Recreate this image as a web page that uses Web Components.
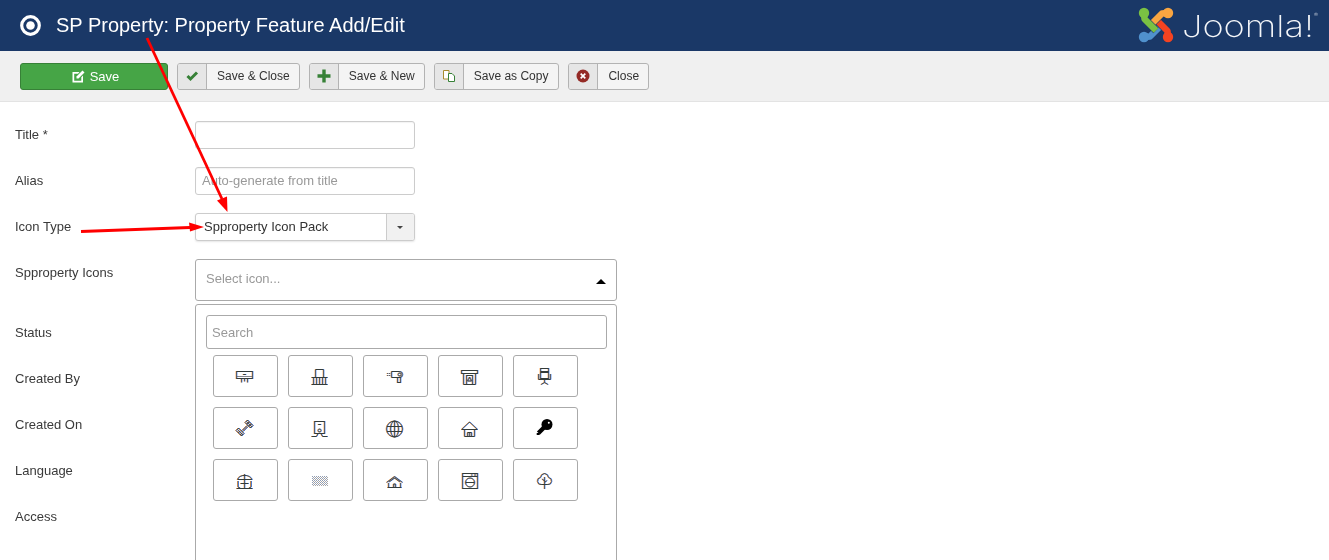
<!DOCTYPE html>
<html lang="en">
<head>
<meta charset="utf-8">
<title>SP Property: Property Feature Add/Edit</title>
<style>
  html, body { margin: 0; height: 100%; overflow: hidden; background: #fff; }
  body { font-family: "Liberation Sans", Arial, sans-serif; font-size: 13px; color: #333; }
</style>
</head>
<body>
<app-page></app-page>

<script>
// small helper so every component keeps its style next to its markup
function shadow(el, html) {
  el.attachShadow({ mode: 'open' }).innerHTML = html;
}

// line icons, 1:1 on a 24px box. drawn three times below for the lcd colour fringe
const ICONS = {
  aircon: `<rect x="3.5" y="7.5" width="16" height="7"/><path d="M4 12.500h15" opacity=".5"/><path d="M10 10.500h3M8.500 15v3.500M11.500 15v2.500M14.500 15v3.500"/>`,
  heater: `<path d="M7.500 13V5.500h8V13M3.500 13.500h16M3.500 20.500h16M5.500 14v6M8.500 14v6M11.500 14v6M14.500 14v6M17.500 14v6"/>`,
  dryer: `<path d="M8.500 7.500h8a3 3 0 0 1 0 6h-8zM4 9.500h1M6 9.500h1M4 11.500h1M6 11.500h1"/><circle cx="16.500" cy="10.500" r="1.500"/><rect x="14.500" y="13.500" width="3" height="5"/>`,
  fireplace: `<rect x="3.500" y="6.500" width="16" height="3"/><path d="M5.500 9.500V20.500h12V9.500"/><rect x="8.500" y="11.500" width="6" height="9"/><path d="M11.500 13l2 4h-4z"/>`,
  chair: `<rect x="7.500" y="4.500" width="8" height="3"/><rect x="7.500" y="8.500" width="8" height="6"/><path d="M5.500 10v5.500h12V10M11.500 15.500v3M8 20.500l3.500-2 3.500 2"/>`,
  dumbbell: `<path d="M12 6.500L14.500 4l5.500 5.500L17.500 12zM3 14.500L5.500 12l5.500 5.500L8.500 20zM9 14.500l5-5M10 15.500l5-5M13.500 5.500L19 11M4.500 13.500L10 19M14 8l2-2M16 10l2-2M5 17l2-2M7 19l2-2"/>`,
  boiler: `<rect x="6.500" y="5.500" width="10" height="12"/><path d="M10 8.500h3M3.500 20.500h5l1.500-3h3l1.500 3h5"/><circle cx="11.500" cy="14.500" r="1.500"/>`,
  globe: `<circle cx="11.500" cy="13" r="8"/><ellipse cx="11.500" cy="13" rx="4" ry="8"/><path d="M11.500 5v16M4 10.500h15M4 15.500h15"/>`,
  house: `<path d="M3.500 13.500L11.500 6l8 7.500zM6.500 14v6.500h10V14M9.500 20.500v-4h4v4M11.500 16.500v4"/>`,
  gazebo: `<path d="M4.500 11.500C6 6 17 6 19 11.500zM11.500 6v14M7.500 15.500h8M5 13v6l2 1M18 13v6l-2 1M3.500 20.500h16"/>`,
  cottage: `<path d="M3.500 14.500l8-6 8 6M6 14l5.500-4 5.500 4M5.500 15v4M17.500 15v4M4.500 19.500h14M10.500 19v-3h2v3"/>`,
  washer: `<rect x="4.500" y="5.500" width="15" height="15"/><path d="M4.500 8.500h15M13 7h1.500M16 7h2M7.500 14.500h9"/><circle cx="12" cy="14.500" r="4.500"/>`,
  tree: `<path d="M11.500 5.500a4.500 4.500 0 0 1 4 4 3.500 3.500 0 0 1-1 7h-6a3.500 3.500 0 0 1-1-7 4.500 4.500 0 0 1 4-4zM11.500 9v12M11.500 13L9 11M11.500 14.500l2.500-2"/>`,
};

// these two do not take the fringe
const SOLID_ICONS = {
  key: `<circle cx="14" cy="8.500" r="5.500" fill="#000"/><path d="M11 11.500L5.500 17" stroke="#000" stroke-width="4.500"/><path d="M3.700 19h3v-2h-3z" fill="#000"/><circle cx="15.800" cy="6.800" r="1" fill="#fff"/>`,
  pool: `<path fill="none" stroke="#8f9cb4" stroke-dasharray="1 1" d="M4 8.500h16M4 10.500h16M4 12.500h16M4 14.500h16M4 16.500h16"/><path fill="none" stroke="#a9a6a6" stroke-dasharray="1 1" d="M5 9.500h15M5 11.500h15M5 13.500h15M5 15.500h15M5 17.500h15"/>`,
};

const TILES = ['aircon', 'heater', 'dryer', 'fireplace', 'chair', 'dumbbell', 'boiler', 'globe', 'house', 'key', 'gazebo', 'pool', 'cottage', 'washer', 'tree'];

const TOOLBAR_ICONS = {
  check: `<path d="M2.500 7l3 3L12 3.500" fill="none" stroke="#378137" stroke-width="3"/>`,
  plus: `<path d="M7 .5v13M.5 7h13" stroke="#378137" stroke-width="3.400"/>`,
  copy: `<path d="M1.500 1.500h5.500v8.500H1.500z" fill="#fff" stroke="#a98b2e"/><path d="M6.500 4.500h3.500l2.500 2.500v5.500h-6z" fill="#fff" stroke="#378137"/>`,
  close: `<circle cx="7" cy="7" r="6.500" fill="#942a25"/><path d="M4.700 4.700l4.600 4.600M9.300 4.700l-4.600 4.600" stroke="#fff" stroke-width="1.700"/>`,
};

// one band of the logo: dark underlay first so the bands read as woven
function logoBand(d, c, cx, cy) {
  return `<path d="${d}" stroke="#1a3867" stroke-width="7.500"/><path d="${d}" stroke="${c}" stroke-width="6.500"/><circle cx="${cx}" cy="${cy}" r="5.200" fill="${c}"/>`;
}

class JoomlaLogo extends HTMLElement {
  connectedCallback() {
    shadow(this, `
      <style>
        :host { display: block; width: 183px; height: 41px; }
        svg { display: block; }
        text { font-family: "Inter", "Open Sans", sans-serif; font-weight: 200; fill: #f4f6f9; }
      </style>
      <svg width="183" height="41" viewBox="0 0 183 41" fill="none">
        <g transform="translate(2 2)" stroke-linejoin="round">
          ${logoBand('M6 30L12 29.500 23.500 18', '#5091cd', 6, 30)}
          ${logoBand('M30 30L29.500 24 18 12.500', '#f44321', 30, 30)}
          ${logoBand('M30 6L24 6.500 12.500 18', '#f9a541', 30, 6)}
          ${logoBand('M6 6L6.500 12 18 23.500', '#7ac143', 6, 6)}
        </g>
        <text x="46" y="32" font-size="30" textLength="132" lengthAdjust="spacingAndGlyphs">Joomla!</text>
        <text x="178" y="12" font-size="6">®</text>
      </svg>`);
  }
}

class AppHeader extends HTMLElement {
  connectedCallback() {
    shadow(this, `
      <style>
        :host { display: flex; align-items: center; height: 51px; background: #1a3867; color: #fff; padding: 0 10px 0 20px; }
        svg { flex: none; margin-right: 15px; }
        h1 { flex: 1; margin: 0; font: 400 20px "Liberation Sans", Arial, sans-serif; }
      </style>
      <svg width="21" height="21" viewBox="0 0 21 21"><circle cx="10.500" cy="10.500" r="8.800" fill="none" stroke="#fff" stroke-width="3.200"/><circle cx="10.500" cy="10.500" r="4.300" fill="#fff"/></svg>
      <h1><slot></slot></h1>
      <joomla-logo></joomla-logo>`);
  }
}

class ToolButton extends HTMLElement {
  connectedCallback() {
    const icon = TOOLBAR_ICONS[this.getAttribute('icon')] || '';
    shadow(this, `
      <style>
        :host { display: inline-flex; box-sizing: border-box; height: 27px; align-items: stretch; background: #f4f4f4; border: 1px solid #b3b3b3; border-radius: 3px; font-size: 12px; color: #333; }
        .ico { width: 28px; flex: none; display: flex; align-items: center; justify-content: center; background: #e6e6e6; border-right: 1px solid #b3b3b3; border-radius: 2px 0 0 2px; }
        .txt { display: flex; align-items: center; padding: 0 var(--pad-r, 9px) 0 10px; }
      </style>
      <span class="ico"><svg width="14" height="14" viewBox="0 0 14 14">${icon}</svg></span>
      <span class="txt"><slot></slot></span>`);
  }
}

class SaveButton extends HTMLElement {
  connectedCallback() {
    shadow(this, `
      <style>
        :host { display: inline-flex; box-sizing: border-box; width: 148px; height: 27px; gap: 5px; padding-left: 3px; align-items: center; justify-content: center; background: #46a546; border: 1px solid #378137; border-radius: 3px; color: #fff; font-size: 13px; }
      </style>
      <svg width="13" height="13" viewBox="0 0 13 13"><path d="M.500 2h7L6 3.700H2.200v7.100h7.100V7.200L11 5.500V12.500H.500z" fill="#fff"/><path d="M4.500 6.500L10.500.5l2 2-6 6h-2z" fill="#fff"/></svg>
      <slot></slot>`);
  }
}

class AppToolbar extends HTMLElement {
  connectedCallback() {
    shadow(this, `
      <style>
        :host { display: flex; align-items: center; gap: 9px; box-sizing: border-box; height: 51px; padding: 0 20px; background: #f0f0f0; border-bottom: 1px solid #e3e3e3; }
      </style>
      <slot></slot>`);
  }
}

class FormRow extends HTMLElement {
  connectedCallback() {
    shadow(this, `
      <style>
        :host { display: flex; margin-bottom: 18px; min-height: 28px; font-size: 13px; color: #3a3a3a; }
        label { width: 180px; flex: none; line-height: 27px; }
      </style>
      <label>${this.getAttribute('label')}</label>
      <slot></slot>`);
  }
}

class TextField extends HTMLElement {
  connectedCallback() {
    const ph = this.getAttribute('placeholder') || '';
    shadow(this, `
      <style>
        :host { display: block; box-sizing: border-box; width: 220px; height: 28px; padding: 0 6px; background: #fff; border: 1px solid #ccc; border-radius: 3px; box-shadow: inset 0 1px 1px rgba(0,0,0,.05); font-size: 13px; line-height: 26px; color: #999; }
      </style>
      ${ph}`);
  }
}

class ChosenSelect extends HTMLElement {
  connectedCallback() {
    shadow(this, `
      <style>
        :host { display: flex; box-sizing: border-box; width: 220px; height: 28px; background: #fff; border: 1px solid #ccc; border-radius: 3px; box-shadow: 0 1px 2px rgba(0,0,0,.1); font-size: 13px; line-height: 26px; color: #333; }
        .val { flex: 1; padding-left: 8px; }
        .btn { width: 27px; background: #f1f1f1; border-left: 1px solid #ccc; border-radius: 0 2px 2px 0; display: flex; align-items: center; justify-content: center; }
        .btn i { border: 3.500px solid transparent; border-top: 3.500px solid #444; border-bottom: 0; margin-right: 1px; }
      </style>
      <span class="val"><slot></slot></span>
      <span class="btn"><i></i></span>`);
  }
}

class IconTile extends HTMLElement {
  connectedCallback() {
    const name = this.getAttribute('name');
    let body = SOLID_ICONS[name];
    if (!body) {
      // orange left, grey middle, blue right, multiplied: same fringe as lcd text rendering
      body = [['#ffb060', -0.5], ['#888899', 0], ['#60a0ff', 0.5]].map(([c, dx]) =>
        `<g transform="translate(${dx} 0)" stroke="${c}" fill="none" style="mix-blend-mode:multiply">${ICONS[name]}</g>`).join('');
    }
    shadow(this, `
      <style>
        :host { display: flex; align-items: center; justify-content: center; box-sizing: border-box; height: 42px; background: #fff; border: 1px solid #aaa; border-radius: 3px; }
        svg { margin-right: 1px; }
      </style>
      <svg width="24" height="24" viewBox="0 0 24 24">${body}</svg>`);
  }
}

class IconPicker extends HTMLElement {
  connectedCallback() {
    const tiles = TILES.map((n) => `<icon-tile name="${n}"></icon-tile>`).join('');
    shadow(this, `
      <style>
        :host { display: block; position: relative; width: 422px; height: 42px; font-size: 13px; color: #999; }
        .head { display: flex; align-items: center; justify-content: space-between; box-sizing: border-box; height: 42px; padding: 0 10px 4px 10px; border: 1px solid #aaa; border-radius: 3px; }
        .head i { border: 5px solid transparent; border-bottom: 5px solid #000; border-top: 0; margin-top: 7px; }
        .panel { position: absolute; top: 45px; left: 0; right: 0; height: 300px; box-sizing: border-box; padding: 10px 9px 10px 10px; background: #fff; border: 1px solid #aaa; border-radius: 3px 3px 0 0; }
        .search { box-sizing: border-box; height: 34px; padding-left: 5px; line-height: 33px; border: 1px solid #aaa; border-radius: 3px; }
        .grid { display: grid; grid-template-columns: repeat(5, 65px); column-gap: 10px; row-gap: 10px; margin: 6px 0 0 7px; }
      </style>
      <div class="head"><span>Select icon...</span><i></i></div>
      <div class="panel">
        <div class="search">Search</div>
        <div class="grid">${tiles}</div>
      </div>`);
  }
}

// the red markers drawn over the screenshot
class ArrowLayer extends HTMLElement {
  connectedCallback() {
    shadow(this, `
      <style>
        :host { position: absolute; inset: 0; pointer-events: none; display: block; }
      </style>
      <svg width="1329" height="560">
        <path d="M147 38L222 199" stroke="#f00" stroke-width="2.800"/>
        <path d="M217 200.500L227.500 212L227 196.500z" fill="#f00"/>
        <path d="M81 231.500L190 227.500" stroke="#f00" stroke-width="2.800"/>
        <path d="M189 222.500L204 227L190 231.500z" fill="#f00"/>
      </svg>`);
  }
}

class AppPage extends HTMLElement {
  connectedCallback() {
    shadow(this, `
      <style>
        :host { display: block; position: relative; height: 560px; overflow: hidden; }
        main { padding: 19px 15px 0; }
      </style>
      <app-header>SP Property: Property Feature Add/Edit</app-header>
      <app-toolbar>
        <save-button>Save</save-button>
        <tool-button icon="check">Save &amp; Close</tool-button>
        <tool-button icon="plus">Save &amp; New</tool-button>
        <tool-button icon="copy" style="--pad-r:10px">Save as Copy</tool-button>
        <tool-button icon="close">Close</tool-button>
      </app-toolbar>
      <main>
        <form-row label="Title *"><text-field></text-field></form-row>
        <form-row label="Alias"><text-field placeholder="Auto-generate from title"></text-field></form-row>
        <form-row label="Icon Type"><chosen-select>Spproperty Icon Pack</chosen-select></form-row>
        <form-row label="Spproperty Icons"><icon-picker></icon-picker></form-row>
        <form-row label="Status"></form-row>
        <form-row label="Created By"></form-row>
        <form-row label="Created On"></form-row>
        <form-row label="Language"></form-row>
        <form-row label="Access"></form-row>
      </main>
      <arrow-layer></arrow-layer>`);
  }
}

customElements.define('joomla-logo', JoomlaLogo);
customElements.define('app-header', AppHeader);
customElements.define('tool-button', ToolButton);
customElements.define('save-button', SaveButton);
customElements.define('app-toolbar', AppToolbar);
customElements.define('form-row', FormRow);
customElements.define('text-field', TextField);
customElements.define('chosen-select', ChosenSelect);
customElements.define('icon-tile', IconTile);
customElements.define('icon-picker', IconPicker);
customElements.define('arrow-layer', ArrowLayer);
customElements.define('app-page', AppPage);
</script>
</body>
</html>
